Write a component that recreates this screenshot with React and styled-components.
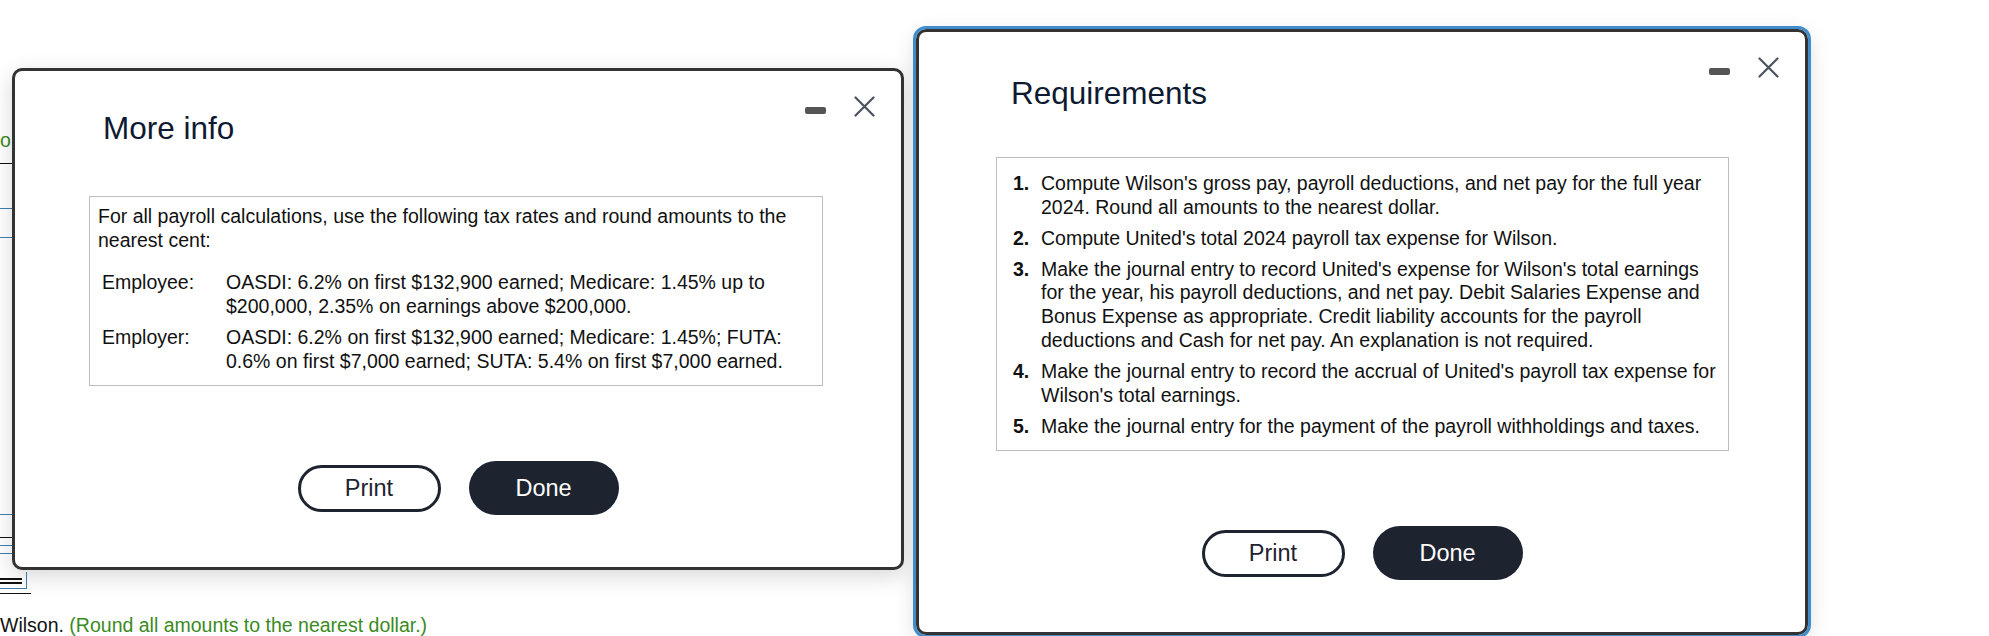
import React from "react";
import styled, { createGlobalStyle, css } from "styled-components";

const GlobalStyle = createGlobalStyle`
  html, body {
    margin: 0;
    padding: 0;
    background: #ffffff;
    font-family: "Liberation Sans", Arial, sans-serif;
  }
`;

const Page = styled.div`
  position: relative;
  width: 1989px;
  height: 636px;
  overflow: hidden;
  background: #ffffff;
`;

// worksheet behind the pop-ups, only a sliver of it shows on the left
const Sheet = styled.div`
  padding-top: 128px;
  font-size: 19.5px;
  line-height: 24px;
`;

const Hint = styled.div`
  color: #3a8a1e;
  height: 24px;
`;

const Rule = styled.div`
  margin-top: ${(p) => p.$gap}px;
  width: ${(p) => p.$w || 60}px;
  height: 0;
  border-top: 1px solid ${(p) => (p.$blue ? "#3c7fb0" : "#111")};
`;

const TotalCell = styled.div`
  margin-top: ${(p) => p.$gap}px;
  width: 27px;
  height: 17px;
  box-sizing: border-box;
  border-right: 1px solid #3c7fb0;
  border-bottom: 1px solid #3c7fb0;
  padding-top: 6px;
`;

const DoubleLine = styled.div`
  width: 22px;
  height: 2px;
  border-top: 2px solid #111;
  border-bottom: 2px solid #111;
`;

const Caption = styled.div`
  margin-top: ${(p) => p.$gap}px;
  color: #111;
  white-space: nowrap;
  line-height: 22px;
  span {
    color: #3a8a1e;
  }
`;

const Dialog = styled.section`
  position: absolute;
  left: ${(p) => p.$x}px;
  top: ${(p) => p.$y}px;
  width: 892px;
  box-sizing: border-box;
  background: #ffffff;
  border: 3px solid #333333;
  border-radius: 10px;
  box-shadow: 0 6px 22px rgba(0, 0, 0, 0.16);
  padding-bottom: 52px;
  ${(p) =>
    p.$focused &&
    css`
      outline: 3px solid #3f8dcd;
    `}
`;

const Header = styled.header`
  display: flex;
  justify-content: space-between;
  align-items: flex-start;
  padding: 25px 26px 0 ${(p) => p.$indent}px;
`;

const Title = styled.h2`
  margin: ${(p) => p.$drop}px 0 0;
  font-size: 31.5px;
  line-height: 38px;
  font-weight: 400;
  color: #0e1a31;
`;

const Controls = styled.div`
  display: flex;
  align-items: flex-start;
  gap: 28px;
`;

const Minimize = styled.span`
  display: block;
  margin-top: 11px;
  width: 21px;
  height: 7px;
  border-radius: 2px;
  background: #555555;
`;

const Close = styled.svg`
  display: block;
  width: 21px;
  height: 21px;
`;

const InfoBox = styled.div`
  margin: ${(p) => p.$top}px 0 0 ${(p) => p.$inset}px;
  width: ${(p) => p.$w}px;
  box-sizing: border-box;
  border: 1px solid #bdbdbd;
  padding: ${(p) => p.$pad};
  font-size: 19.5px;
  line-height: 23.5px;
  color: #111111;
`;

const Lead = styled.p`
  margin: 0 0 19px;
`;

const RateRow = styled.div`
  display: grid;
  grid-template-columns: 128px 1fr;
  & + & {
    margin-top: 8px;
  }
`;

const RateLabel = styled.div`
  padding-left: 4px;
`;

const Steps = styled.ol`
  list-style: none;
  margin: 0;
  padding: 0;
  line-height: 23.7px;
`;

const Step = styled.li`
  display: grid;
  grid-template-columns: 28px 1fr;
  & + & {
    margin-top: 7.3px;
  }
  b {
    font-weight: 700;
  }
`;

const Actions = styled.div`
  display: flex;
  justify-content: center;
  align-items: center;
  gap: 28px;
  margin-top: 75px;
`;

const Button = styled.button`
  box-sizing: border-box;
  font-family: "Liberation Sans", Arial, sans-serif;
  font-size: 23.5px;
  cursor: pointer;
  ${(p) =>
    p.$primary
      ? css`
          width: 150px;
          height: 54px;
          border: none;
          border-radius: 27px;
          background: #1e2330;
          color: #ffffff;
        `
      : css`
          width: 143px;
          height: 47px;
          border: 3px solid #1e2330;
          border-radius: 24px;
          background: #ffffff;
          color: #1e2330;
        `}
`;

function WindowControls() {
  return (
    <Controls>
      <Minimize />
      <Close viewBox="0 0 21 21">
        <path
          d="M1.5 1.5 L19.5 19.5 M19.5 1.5 L1.5 19.5"
          stroke="#4a5260"
          strokeWidth="2.2"
          strokeLinecap="round"
          fill="none"
        />
      </Close>
    </Controls>
  );
}

const steps = [
  "Compute Wilson's gross pay, payroll deductions, and net pay for the full year 2024. Round all amounts to the nearest dollar.",
  "Compute United's total 2024 payroll tax expense for Wilson.",
  "Make the journal entry to record United's expense for Wilson's total earnings for the year, his payroll deductions, and net pay. Debit Salaries Expense and Bonus Expense as appropriate. Credit liability accounts for the payroll deductions and Cash for net pay. An explanation is not required.",
  "Make the journal entry to record the accrual of United's payroll tax expense for Wilson's total earnings.",
  "Make the journal entry for the payment of the payroll withholdings and taxes.",
];

export default function App() {
  return (
    <Page>
      <GlobalStyle />
      <Sheet>
        <Hint>o</Hint>
        <Rule $gap={11} />
        <Rule $gap={44} $blue />
        <Rule $gap={28} $blue />
        <Rule $gap={276} $blue />
        <Rule $gap={22} />
        <Rule $gap={7} $blue />
        <Rule $gap={7} $blue />
        <TotalCell $gap={18}>
          <DoubleLine />
        </TotalCell>
        <Rule $gap={4} $w={31} />
        <Caption $gap={20}>
          Wilson. <span>(Round all amounts to the nearest dollar.)</span>
        </Caption>
      </Sheet>

      <Dialog $x={12} $y={68}>
        <Header $indent={88}>
          <Title $drop={13}>More info</Title>
          <WindowControls />
        </Header>
        <InfoBox $top={49} $inset={74} $w={734} $pad="8px 10px 12px 8px">
          <Lead>
            For all payroll calculations, use the following tax rates and round
            amounts to the nearest cent:
          </Lead>
          <RateRow>
            <RateLabel>Employee:</RateLabel>
            <div>
              OASDI: 6.2% on first $132,900 earned; Medicare: 1.45% up to
              $200,000, 2.35% on earnings above $200,000.
            </div>
          </RateRow>
          <RateRow>
            <RateLabel>Employer:</RateLabel>
            <div>
              OASDI: 6.2% on first $132,900 earned; Medicare: 1.45%; FUTA: 0.6%
              on first $7,000 earned; SUTA: 5.4% on first $7,000 earned.
            </div>
          </RateRow>
        </InfoBox>
        <Actions>
          <Button>Print</Button>
          <Button $primary>Done</Button>
        </Actions>
      </Dialog>

      <Dialog $x={916} $y={29} $focused>
        <Header $indent={92}>
          <Title $drop={17}>Requirements</Title>
          <WindowControls />
        </Header>
        <InfoBox $top={45} $inset={77} $w={733} $pad="14px 8px 12px 16px">
          <Steps>
            {steps.map((text, i) => (
              <Step key={i}>
                <b>{i + 1}.</b>
                <span>{text}</span>
              </Step>
            ))}
          </Steps>
        </InfoBox>
        <Actions>
          <Button>Print</Button>
          <Button $primary>Done</Button>
        </Actions>
      </Dialog>
    </Page>
  );
}
